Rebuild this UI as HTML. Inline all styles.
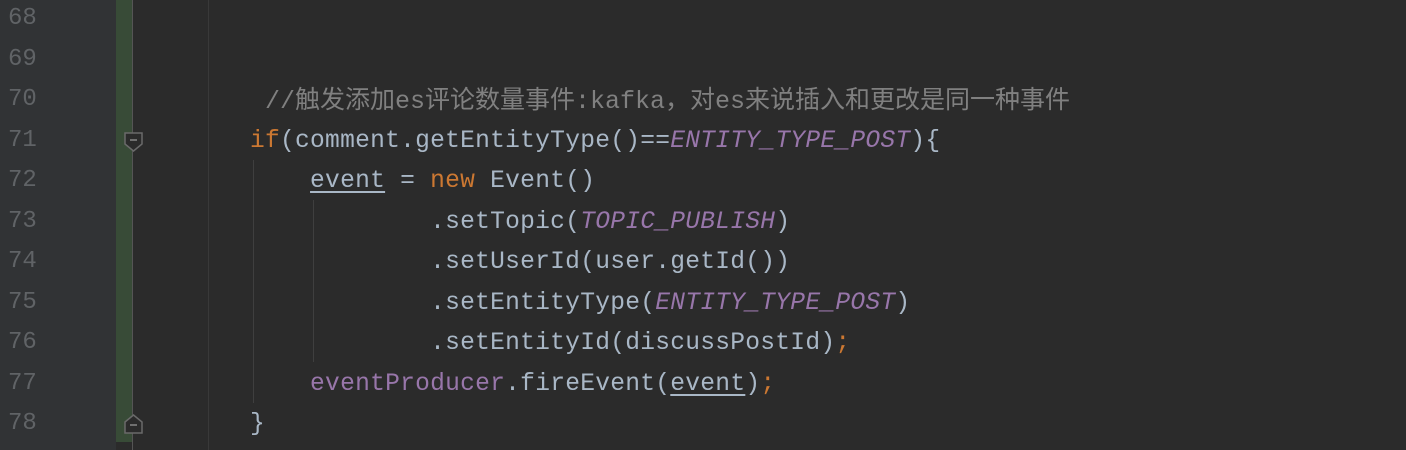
<html><head><style>
body{margin:0;width:1406px;height:450px;background:#2b2b2b;overflow:hidden;position:relative;font-family:"Liberation Mono","Noto Sans CJK SC",monospace;font-size:24.6px}
.g{position:absolute;left:0;top:0;width:116px;height:450px;background:#313335}
.gb{position:absolute;left:116px;top:0;width:16px;height:442px;background:#384b37}
.gl{position:absolute;left:132px;top:0;width:1px;height:450px;background:#555}
.vg{position:absolute;left:208px;top:0;width:1px;height:450px;background:#393939}
.ig{position:absolute;width:1px;background:#3f3f3f}
.n{position:absolute;left:8px;color:#606366;height:40.5px;line-height:40.5px;font-size:24px}
.l{position:absolute;left:250px;color:#a9b7c6;height:40.5px;line-height:42px;white-space:pre;letter-spacing:0.25px}
.k{color:#cc7832}.c{color:#808080;font-size:25px;letter-spacing:0}.p{color:#9876aa;font-style:italic}.f{color:#9876aa}.u{text-decoration:underline;text-underline-offset:4px}
</style></head><body>
<div class="g"></div><div class="gb"></div><div class="gl"></div><div class="vg"></div>
<div class="ig" style="left:253px;top:160px;height:243px"></div>
<div class="ig" style="left:313px;top:200px;height:162px"></div>
<svg style="position:absolute;left:124px;top:132px" width="20" height="22"><path d="M1 1H18V12L9.5 19L1 12Z" fill="#2b2b2b" stroke="#6a6a6a" stroke-width="1.5"/><path d="M6 8H13" stroke="#888" stroke-width="1.5"/></svg>
<svg style="position:absolute;left:124px;top:413px" width="20" height="22"><path d="M1 20H18V9L9.5 2L1 9Z" fill="#2b2b2b" stroke="#6a6a6a" stroke-width="1.5"/><path d="M6 12H13" stroke="#888" stroke-width="1.5"/></svg>
<div class="n" style="top:-1px">68</div>
<div class="n" style="top:39.5px">69</div>
<div class="n" style="top:80px">70</div>
<div class="n" style="top:120.5px">71</div>
<div class="n" style="top:161px">72</div>
<div class="n" style="top:201.5px">73</div>
<div class="n" style="top:242px">74</div>
<div class="n" style="top:282.5px">75</div>
<div class="n" style="top:323px">76</div>
<div class="n" style="top:363.5px">77</div>
<div class="n" style="top:404px">78</div>
<div class="l c" style="top:77px;line-height:42px"> //触发添加es评论数量事件:kafka<span style="font-family:'Noto Sans CJK SC',sans-serif">，</span>对es来说插入和更改是同一种事件</div>
<div class="l" style="top:120.5px"><span class="k">if</span>(comment.getEntityType()==<span class="p">ENTITY_TYPE_POST</span>){</div>
<div class="l" style="top:161px">    <span class="u">event</span> = <span class="k">new</span> Event()</div>
<div class="l" style="top:201.5px">            .setTopic(<span class="p">TOPIC_PUBLISH</span>)</div>
<div class="l" style="top:242px">            .setUserId(user.getId())</div>
<div class="l" style="top:282.5px">            .setEntityType(<span class="p">ENTITY_TYPE_POST</span>)</div>
<div class="l" style="top:323px">            .setEntityId(discussPostId)<span class="k">;</span></div>
<div class="l" style="top:363.5px">    <span class="f">eventProducer</span>.fireEvent(<span class="u">event</span>)<span class="k">;</span></div>
<div class="l" style="top:404px">}</div>
</body></html>
